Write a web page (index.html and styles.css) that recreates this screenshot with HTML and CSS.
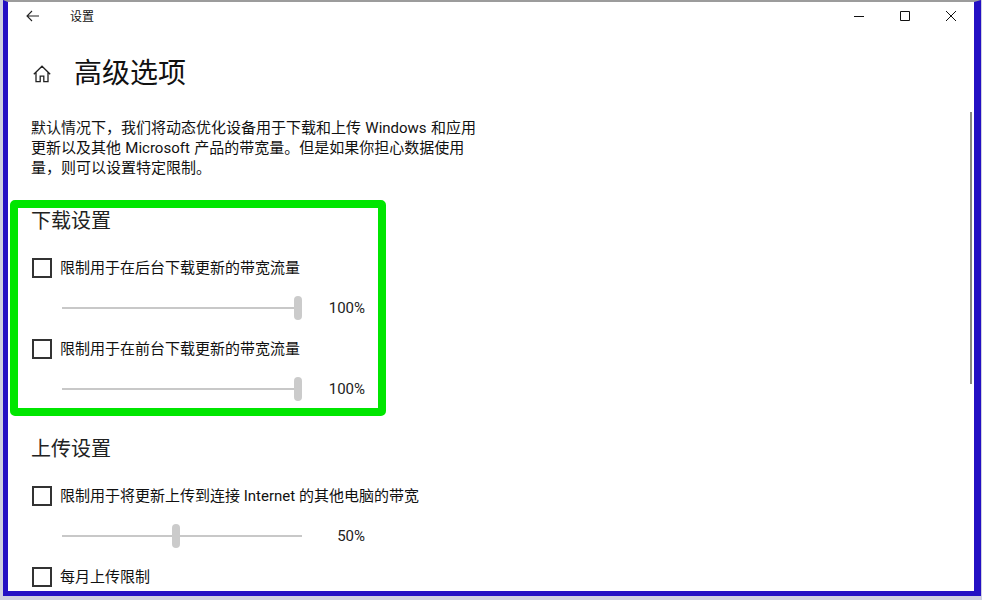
FILE: index.html
```html
<!DOCTYPE html>
<html lang="zh-CN">
<head>
<meta charset="utf-8">
<title>设置</title>
<link rel="stylesheet" href="styles.css">
</head>
<body>
<div class="screen">
  <div class="window">
    <header class="titlebar">
      <svg class="back" width="14" height="12" viewBox="0 0 14 12"><path d="M13 6H1.2M6 1 1 6l5 5" fill="none" stroke="#222" stroke-width="1.1"/></svg>
      <span class="app-name">设置</span>
      <div class="controls">
        <svg width="10" height="10" viewBox="0 0 10 10"><path d="M0 5.5h10" stroke="#111" stroke-width="1"/></svg>
        <svg width="10" height="10" viewBox="0 0 10 10"><path d="M.5.5h9v9h-9z" fill="none" stroke="#111" stroke-width="1"/></svg>
        <svg width="10" height="10" viewBox="0 0 10 10"><path d="m0 0 10 10M10 0 0 10" stroke="#111" stroke-width="1"/></svg>
      </div>
    </header>
    <main class="content">
      <div class="page-head">
        <svg class="home" width="18" height="18" viewBox="0 0 18 18"><path d="M.8 9.2 9 1.2l8.2 8M3 7.4v9.3h4.2v-5.5h3.6v5.5H15V7.4" fill="none" stroke="#222" stroke-width="1.3"/></svg>
        <h1>高级选项</h1>
      </div>
      <p class="intro">默认情况下&#xFF0C;我们将动态优化设备用于下载和上传 Windows 和应用<br>更新以及其他 Microsoft 产品的带宽量。但是如果你担心数据使用<br>量&#xFF0C;则可以设置特定限制。</p>

      <h2 class="first">下载设置</h2>
      <label class="check"><span class="box"></span>限制用于在后台下载更新的带宽流量</label>
      <div class="slider-row"><div class="slider"><span class="thumb" style="left:232px"></span></div><span class="value">100%</span></div>
      <label class="check next"><span class="box"></span>限制用于在前台下载更新的带宽流量</label>
      <div class="slider-row"><div class="slider"><span class="thumb" style="left:232px"></span></div><span class="value">100%</span></div>

      <h2>上传设置</h2>
      <label class="check"><span class="box"></span>限制用于将更新上传到连接 Internet 的其他电脑的带宽</label>
      <div class="slider-row"><div class="slider"><span class="thumb" style="left:110px"></span></div><span class="value">50%</span></div>
      <label class="check next"><span class="box"></span>每月上传限制</label>
    </main>
    <div class="scrollbar"></div>
    <div class="highlight"></div>
  </div>
</div>
</body>
</html>
```
FILE: styles.css
```css
* { box-sizing: border-box; }
html, body { margin: 0; padding: 0; }
body {
  width: 982px;
  height: 600px;
  overflow: hidden;
  font-family: Roboto, "Noto Sans CJK SC", sans-serif;
  color: #111;
}
.screen {
  width: 982px;
  height: 600px;
  padding: 0 1px 4px 3px;
  background: #cfcfe0;
}
.window {
  position: relative;
  width: 978px;
  height: 596px;
  overflow: hidden;
  background: #fff;
  border-style: solid;
  border-color: #9c9c9c #2410c4 #2410c4 #2410c4;
  border-width: 2px 7px 5px 5px;
}
.titlebar {
  display: flex;
  align-items: center;
  height: 28px;
  padding-left: 18px;
}
.back { margin-right: 30px; }
.app-name { font-size: 12px; line-height: 28px; padding-top: 2px; }
.controls {
  display: flex;
  gap: 36px;
  margin-left: auto;
  margin-right: 18px;
}
.content { padding-left: 24px; }
.page-head {
  display: flex;
  align-items: center;
  height: 42px;
  margin-top: 23px;
  padding-left: 1px;
}
.home { margin-right: 23px; }
h1 {
  margin: 0;
  font-size: 28px;
  line-height: 42px;
  font-weight: 400;
  color: #111;
}
.intro {
  margin: 23px 0 0 -1px;
  font-size: 15px;
  line-height: 20px;
  word-spacing: 0.6px;
}
h2 {
  margin: 34px 0 0 -1px;
  font-size: 20px;
  line-height: 28px;
  font-weight: 400;
  color: #222;
}
h2.first { margin-top: 29px; }
.check {
  display: flex;
  align-items: center;
  gap: 8px;
  height: 22px;
  margin-top: 20px;
  font-size: 15px;
}
.check.next { margin-top: 16px; }
.box {
  width: 20px;
  height: 20px;
  margin-top: 4px;
  border: 2px solid #333;
  background: #fff;
}
.slider-row {
  display: flex;
  align-items: center;
  height: 24px;
  margin-top: 19px;
  padding-left: 30px;
  width: 333px;
}
.slider {
  position: relative;
  width: 240px;
  height: 2px;
  background: #c8c8c8;
}
.thumb {
  position: absolute;
  top: -11px;
  width: 8px;
  height: 24px;
  border-radius: 4px;
  background: #cbcbcb;
}
.value {
  margin-left: auto;
  font-size: 15px;
  line-height: 24px;
  color: #222;
}
.scrollbar {
  position: absolute;
  top: 110px;
  right: 2px;
  width: 2px;
  height: 272px;
  background: #8a8a82;
}
.highlight {
  position: absolute;
  left: 2px;
  top: 198px;
  width: 376px;
  height: 216px;
  border: 8px solid #00e600;
  border-radius: 5px;
}
```
